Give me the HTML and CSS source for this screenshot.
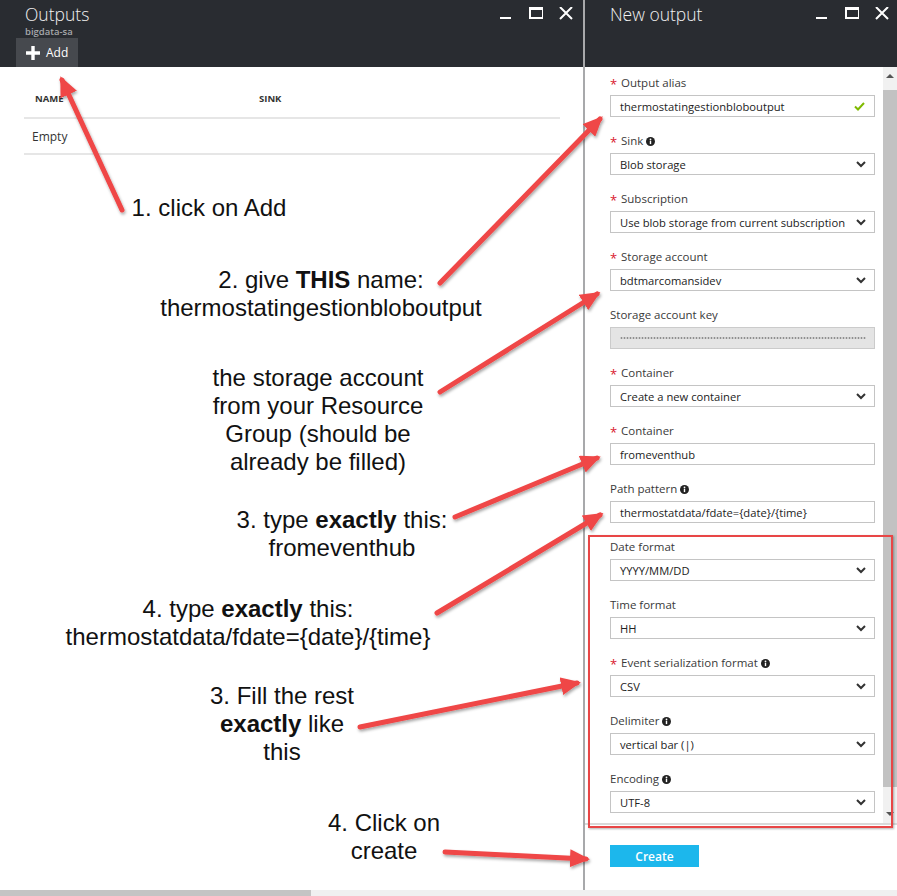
FILE: index.html
```html
<!DOCTYPE html>
<html>
<head>
<meta charset="utf-8">
<link rel="stylesheet" href="styles.css">
</head>
<body>
<div class="app">
  <section class="blade blade-outputs">
    <header class="blade-head">
      <div class="head-row">
        <div class="titles">
          <h1 class="title">Outputs</h1>
          <div class="subtitle">bigdata-sa</div>
        </div>
        <div class="win-ctrls">
          <svg class="ctl" viewBox="0 0 14 14"><rect x="1" y="10" width="11" height="2" fill="#fff"/></svg>
          <svg class="ctl" viewBox="0 0 14 14"><rect x="1" y="0" width="13" height="11" fill="none" stroke="#fff" stroke-width="2"/><rect x="1" y="0" width="13" height="3" fill="#fff"/></svg>
          <svg class="ctl" viewBox="0 0 14 14"><path d="M1 0 L13 12 M13 0 L1 12" stroke="#fff" stroke-width="2"/></svg>
        </div>
      </div>
      <div class="cmd-bar">
        <div class="cmd-add">
          <svg class="plus" viewBox="0 0 16 16"><path d="M8 1 V15 M1 8 H15" stroke="#fff" stroke-width="3.4"/></svg>
          <span>Add</span>
        </div>
      </div>
    </header>
    <div class="grid">
      <div class="grid-row grid-head">
        <div class="col-name">NAME</div>
        <div class="col-sink">SINK</div>
      </div>
      <div class="grid-row grid-body">
        <div class="col-name">Empty</div>
      </div>
    </div>
  </section>

  <section class="blade blade-new">
    <header class="blade-head blade-head-new">
      <div class="head-row">
        <div class="titles">
          <h1 class="title">New output</h1>
        </div>
        <div class="win-ctrls">
          <svg class="ctl" viewBox="0 0 14 14"><rect x="1" y="10" width="11" height="2" fill="#fff"/></svg>
          <svg class="ctl" viewBox="0 0 14 14"><rect x="1" y="0" width="13" height="11" fill="none" stroke="#fff" stroke-width="2"/><rect x="1" y="0" width="13" height="3" fill="#fff"/></svg>
          <svg class="ctl" viewBox="0 0 14 14"><path d="M1 0 L13 12 M13 0 L1 12" stroke="#fff" stroke-width="2"/></svg>
        </div>
      </div>
    </header>
    <div class="form-wrap">
      <div class="form">
        <div class="field">
          <div class="label"><span class="req">*</span>Output alias</div>
          <div class="input"><span class="val">thermostatingestionbloboutput</span><svg class="check" viewBox="0 0 11 9"><polyline points="1,4.5 4,7.5 10,1" fill="none" stroke="#7fba00" stroke-width="2"/></svg></div>
        </div>
        <div class="field">
          <div class="label"><span class="req">*</span>Sink<svg class="info" viewBox="0 0 9 9"><circle cx="4.5" cy="4.5" r="4.5" fill="#222"/><circle cx="4.5" cy="2.3" r="0.9" fill="#fff"/><rect x="3.8" y="3.7" width="1.4" height="3.4" fill="#fff"/></svg></div>
          <div class="input"><span class="val">Blob storage</span><svg class="chev" viewBox="0 0 10 7"><polyline points="1,1 5,5 9,1" fill="none" stroke="#333" stroke-width="2"/></svg></div>
        </div>
        <div class="field">
          <div class="label"><span class="req">*</span>Subscription</div>
          <div class="input"><span class="val">Use blob storage from current subscription</span><svg class="chev" viewBox="0 0 10 7"><polyline points="1,1 5,5 9,1" fill="none" stroke="#333" stroke-width="2"/></svg></div>
        </div>
        <div class="field">
          <div class="label"><span class="req">*</span>Storage account</div>
          <div class="input"><span class="val">bdtmarcomansidev</span><svg class="chev" viewBox="0 0 10 7"><polyline points="1,1 5,5 9,1" fill="none" stroke="#333" stroke-width="2"/></svg></div>
        </div>
        <div class="field">
          <div class="label">Storage account key</div>
          <div class="input input-disabled"><div class="dots"></div></div>
        </div>
        <div class="field">
          <div class="label"><span class="req">*</span>Container</div>
          <div class="input"><span class="val">Create a new container</span><svg class="chev" viewBox="0 0 10 7"><polyline points="1,1 5,5 9,1" fill="none" stroke="#333" stroke-width="2"/></svg></div>
        </div>
        <div class="field">
          <div class="label"><span class="req">*</span>Container</div>
          <div class="input"><span class="val">fromeventhub</span></div>
        </div>
        <div class="field">
          <div class="label">Path pattern<svg class="info" viewBox="0 0 9 9"><circle cx="4.5" cy="4.5" r="4.5" fill="#222"/><circle cx="4.5" cy="2.3" r="0.9" fill="#fff"/><rect x="3.8" y="3.7" width="1.4" height="3.4" fill="#fff"/></svg></div>
          <div class="input"><span class="val">thermostatdata/fdate={date}/{time}</span></div>
        </div>
        <div class="field">
          <div class="label">Date format</div>
          <div class="input"><span class="val">YYYY/MM/DD</span><svg class="chev" viewBox="0 0 10 7"><polyline points="1,1 5,5 9,1" fill="none" stroke="#333" stroke-width="2"/></svg></div>
        </div>
        <div class="field">
          <div class="label">Time format</div>
          <div class="input"><span class="val">HH</span><svg class="chev" viewBox="0 0 10 7"><polyline points="1,1 5,5 9,1" fill="none" stroke="#333" stroke-width="2"/></svg></div>
        </div>
        <div class="field">
          <div class="label"><span class="req">*</span>Event serialization format<svg class="info" viewBox="0 0 9 9"><circle cx="4.5" cy="4.5" r="4.5" fill="#222"/><circle cx="4.5" cy="2.3" r="0.9" fill="#fff"/><rect x="3.8" y="3.7" width="1.4" height="3.4" fill="#fff"/></svg></div>
          <div class="input"><span class="val">CSV</span><svg class="chev" viewBox="0 0 10 7"><polyline points="1,1 5,5 9,1" fill="none" stroke="#333" stroke-width="2"/></svg></div>
        </div>
        <div class="field">
          <div class="label">Delimiter<svg class="info" viewBox="0 0 9 9"><circle cx="4.5" cy="4.5" r="4.5" fill="#222"/><circle cx="4.5" cy="2.3" r="0.9" fill="#fff"/><rect x="3.8" y="3.7" width="1.4" height="3.4" fill="#fff"/></svg></div>
          <div class="input"><span class="val">vertical bar (|)</span><svg class="chev" viewBox="0 0 10 7"><polyline points="1,1 5,5 9,1" fill="none" stroke="#333" stroke-width="2"/></svg></div>
        </div>
        <div class="field">
          <div class="label">Encoding<svg class="info" viewBox="0 0 9 9"><circle cx="4.5" cy="4.5" r="4.5" fill="#222"/><circle cx="4.5" cy="2.3" r="0.9" fill="#fff"/><rect x="3.8" y="3.7" width="1.4" height="3.4" fill="#fff"/></svg></div>
          <div class="input"><span class="val">UTF-8</span><svg class="chev" viewBox="0 0 10 7"><polyline points="1,1 5,5 9,1" fill="none" stroke="#333" stroke-width="2"/></svg></div>
        </div>
      </div>
      <div class="vscroll">
        <div class="arrow-up"></div>
        <div class="vthumb"></div>
        <div class="arrow-down"></div>
      </div>
    </div>
    <div class="footer">
      <div class="btn-create">Create</div>
    </div>
  </section>
</div>
<div class="hscroll"><div class="hthumb"></div></div>

<div class="highlight"></div>

<svg class="arrows" viewBox="0 0 897 896" width="897" height="896">
  <defs>
    <filter id="sh" x="-20%" y="-20%" width="140%" height="140%">
      <feDropShadow dx="1" dy="2" stdDeviation="1.5" flood-color="#000" flood-opacity="0.35"/>
    </filter>
    <marker id="head" markerUnits="userSpaceOnUse" markerWidth="20" markerHeight="18" viewBox="0 0 20 18" refX="16" refY="9" orient="auto">
      <path d="M0 0 L20 9 L0 18 Z" fill="#ef4646"/>
    </marker>
  </defs>
  <g stroke="#ef4646" stroke-width="5" stroke-linecap="round" filter="url(#sh)" marker-end="url(#head)">
    <line x1="122" y1="210" x2="62" y2="80"/>
    <line x1="440" y1="283" x2="600" y2="119"/>
    <line x1="440" y1="392" x2="597" y2="294"/>
    <line x1="455" y1="517" x2="597" y2="458"/>
    <line x1="437" y1="613" x2="600" y2="515"/>
    <line x1="360" y1="727" x2="577" y2="683"/>
    <line x1="445" y1="852" x2="586" y2="859"/>
  </g>
</svg>

<div class="annot a1">1. click on Add</div>
<div class="annot a2">2. give <b>THIS</b> name:<br>thermostatingestionbloboutput</div>
<div class="annot a3">the storage account<br>from your Resource<br>Group (should be<br>already be filled)</div>
<div class="annot a4">3. type <b>exactly</b> this:<br>fromeventhub</div>
<div class="annot a5">4. type <b>exactly</b> this:<br>thermostatdata/fdate={date}/{time}</div>
<div class="annot a6">3. Fill the rest<br><b>exactly</b> like<br>this</div>
<div class="annot a7">4. Click on<br>create</div>
</body>
</html>
```

FILE: styles.css
```css
* { box-sizing: border-box; margin: 0; padding: 0; }

html, body {
  width: 897px;
  height: 896px;
  overflow: hidden;
}

body {
  position: relative;
  background: #ffffff;
  font-family: "Open Sans", "Segoe UI", "Noto Sans", sans-serif;
  color: #333;
}

.app {
  display: flex;
  height: 890px;
}

.blade {
  display: flex;
  flex-direction: column;
  height: 100%;
}

.blade-outputs {
  width: 585px;
  border-right: 2px solid #a8a9ab;
}

.blade-new {
  flex: 1;
  min-width: 0;
}

/* header */
.blade-head {
  height: 67px;
  background: #292c31;
  display: flex;
  flex-direction: column;
  flex-shrink: 0;
}

.head-row {
  display: flex;
  justify-content: space-between;
  height: 38px;
  padding-left: 25px;
}

.title {
  font-weight: 300;
  font-size: 17.5px;
  line-height: 20px;
  color: #f2f2f2;
  margin-top: 4px;
}

.subtitle {
  font-size: 9.5px;
  line-height: 10px;
  font-weight: 600;
  color: #a6a8ab;
  margin-top: 3px;
}

.win-ctrls {
  display: flex;
  gap: 16px;
  padding-top: 7px;
  padding-right: 10px;
}

.blade-new .win-ctrls {
  padding-right: 8px;
}

.ctl {
  width: 14px;
  height: 14px;
  display: block;
}

.cmd-bar {
  flex: 1;
  display: flex;
  padding-left: 16px;
}

.cmd-add {
  width: 62px;
  background: #46494e;
  display: flex;
  align-items: center;
  padding-left: 9px;
  gap: 5px;
  color: #fff;
  font-size: 12px;
}

.plus {
  width: 16px;
  height: 16px;
}

/* grid */
.grid {
  margin: 13px 23px 0 24px;
}

.grid-row {
  display: flex;
  border-bottom: 2px solid #e6e6e6;
}

.grid-head {
  height: 39px;
  align-items: center;
  font-size: 9.5px;
  font-weight: 700;
  color: #333;
}

.grid-head .col-name {
  width: 224px;
  padding-left: 11px;
}

.grid-head .col-sink {
  padding-left: 11px;
}

.grid-body {
  height: 36px;
  align-items: center;
  font-size: 12px;
  color: #333;
}

.grid-body .col-name {
  padding-left: 8px;
}

/* form */
.form-wrap {
  display: flex;
  height: 756px;
  flex-shrink: 0;
  overflow: hidden;
}

.form {
  flex: 1;
  padding: 8px 8px 0 25px;
  overflow: hidden;
}

.field {
  margin-bottom: 16px;
}

.label {
  height: 16px;
  line-height: 16px;
  font-size: 11.5px;
  color: #3a3a3a;
  display: flex;
  align-items: center;
  margin-bottom: 4px;
  white-space: nowrap;
}

.req {
  color: #d9182d;
  width: 11px;
  font-size: 13px;
  position: relative;
  top: 1px;
}

.info {
  width: 9px;
  height: 9px;
  margin-left: 3px;
}

.input {
  height: 22px;
  border: 1px solid #c4c4c4;
  display: flex;
  align-items: center;
  justify-content: space-between;
  padding: 0 8px 0 9px;
  font-size: 11.2px;
  color: #222;
  white-space: nowrap;
}

.chev {
  width: 10px;
  height: 7px;
  flex-shrink: 0;
}

.check {
  width: 11px;
  height: 9px;
  flex-shrink: 0;
  margin-right: 1px;
}

.input-disabled {
  background: #e4e4e4;
  border-color: #cbcbcb;
}

.dots {
  width: 100%;
  height: 2px;
  background-image: radial-gradient(circle, #8f8f8f 0.9px, transparent 1.2px);
  background-size: 3px 2px;
}

.vscroll {
  width: 14px;
  background: #f1f1f1;
  display: flex;
  flex-direction: column;
  align-items: center;
}

.arrow-up {
  margin-top: 7px;
  width: 0;
  height: 0;
  border-left: 4px solid transparent;
  border-right: 4px solid transparent;
  border-bottom: 4px solid #555;
}

.vthumb {
  margin-top: 12px;
  width: 14px;
  height: 697px;
  background: #c2c2c2;
}

.arrow-down {
  margin-top: 25px;
  width: 0;
  height: 0;
  border-left: 4px solid transparent;
  border-right: 4px solid transparent;
  border-top: 4px solid #555;
}

.footer {
  flex: 1;
  border-top: 2px solid #d9d9d9;
  padding: 20px 25px 0;
}

.btn-create {
  width: 89px;
  height: 22px;
  background: #1cb7ec;
  color: #fff;
  font-size: 12px;
  font-weight: 600;
  display: flex;
  align-items: center;
  justify-content: center;
}

.hscroll {
  height: 6px;
  background: #f0f0f0;
}

.hthumb {
  width: 311px;
  height: 6px;
  background: #c4c4c4;
}

/* overlays */
.highlight {
  position: absolute;
  left: 588px;
  top: 535px;
  width: 305px;
  height: 293px;
  border: 2px solid #e84646;
  box-shadow: 1px 1px 2px rgba(0,0,0,0.3);
}

.arrows {
  position: absolute;
  left: 0;
  top: 0;
  pointer-events: none;
}

.annot {
  position: absolute;
  width: 400px;
  font-family: "Liberation Sans", Arial, sans-serif;
  font-size: 24px;
  line-height: 28px;
  color: #111;
  text-align: center;
  white-space: nowrap;
}

.a1 { left: 9px; top: 194px; }
.a2 { left: 121px; top: 266px; }
.a3 { left: 118px; top: 364px; }
.a4 { left: 142px; top: 506px; }
.a5 { left: 48px; top: 595px; }
.a6 { left: 82px; top: 682px; }
.a7 { left: 184px; top: 809px; }
```
